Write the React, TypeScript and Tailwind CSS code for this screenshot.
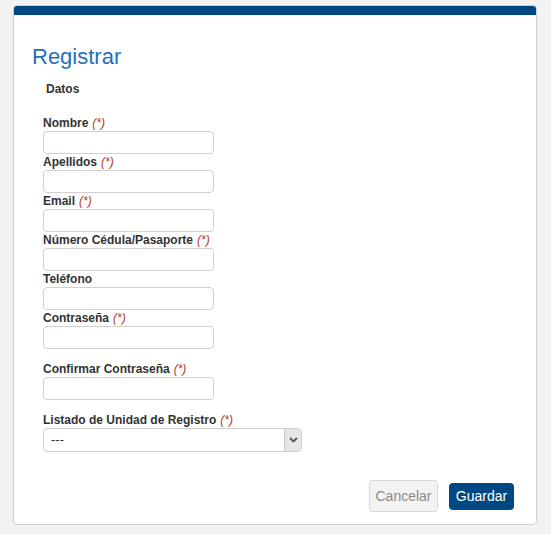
import React from 'react';

type Field = { label: string; required?: boolean; gapBefore?: boolean };

const fields: Field[] = [
  { label: 'Nombre', required: true },
  { label: 'Apellidos', required: true },
  { label: 'Email', required: true },
  { label: 'Número Cédula/Pasaporte', required: true },
  { label: 'Teléfono' },
  { label: 'Contraseña', required: true },
  { label: 'Confirmar Contraseña', required: true, gapBefore: true },
];

function Label({ text, required }: { text: string; required?: boolean }) {
  return (
    <label className="block text-[12px] leading-[16px] font-bold text-[#333]">
      {text}
      {required && <span className="ml-[4px] italic font-normal text-[#b03a2e]">(*)</span>}
    </label>
  );
}

export default function App() {
  return (
    <div
      className="h-[534px] w-[551px] bg-[#f2f2f2] pt-[5px] pl-[13px]"
      style={{ fontFamily: '"Liberation Sans", Arial, sans-serif' }}
    >
      <div className="w-[524px] h-[520px] bg-white border border-[#cfcfcf] rounded-[4px] flex flex-col overflow-hidden">
        <div className="h-[10px] bg-[#004884] -mx-px -mt-px rounded-t-[4px]" />
        <div className="flex-1 flex flex-col pl-[18px] pr-[22px]">
          <h1 className="mt-[30px] text-[22px] leading-[24px] text-[#2770b8]">Registrar</h1>
          <div className="mt-[12px] ml-[14px] text-[12px] leading-[16px] font-bold text-[#333]">Datos</div>
          <form className="mt-[18px] ml-[11px] flex flex-col">
            {fields.map((f) => (
              <div key={f.label} className={f.gapBefore ? 'mt-[12px]' : ''}>
                <Label text={f.label} required={f.required} />
                <input
                  type="text"
                  className="block w-[171px] h-[23px] border border-[#d0d0d0] rounded-[4px] bg-white outline-none"
                />
              </div>
            ))}
            <div className="mt-[12px]">
              <Label text="Listado de Unidad de Registro" required />
              <div className="flex w-[259px] h-[24px] border border-[#cfcfcf] rounded-[4px] bg-white overflow-hidden">
                <span className="flex-1 pl-[7px] text-[13px] leading-[22px] text-[#333]">---</span>
                <span className="w-[17px] flex items-center justify-center bg-[#e6e6e6] border-l border-[#c8c8c8]">
                  <svg width="9" height="6" viewBox="0 0 9 6">
                    <path d="M1 1 L4.5 4.5 L8 1" stroke="#555" strokeWidth="1.8" fill="none" />
                  </svg>
                </span>
              </div>
            </div>
          </form>
          <div className="mt-auto mb-[12px] flex justify-end items-center gap-[11px]">
            <button className="w-[69px] h-[32px] rounded-[4px] border border-[#d8d8d8] bg-[#f3f3f3] text-[14px] text-[#8a8a8a]">
              Cancelar
            </button>
            <button className="w-[65px] h-[27px] rounded-[4px] bg-[#004884] text-[14px] text-white">
              Guardar
            </button>
          </div>
        </div>
      </div>
    </div>
  );
}
